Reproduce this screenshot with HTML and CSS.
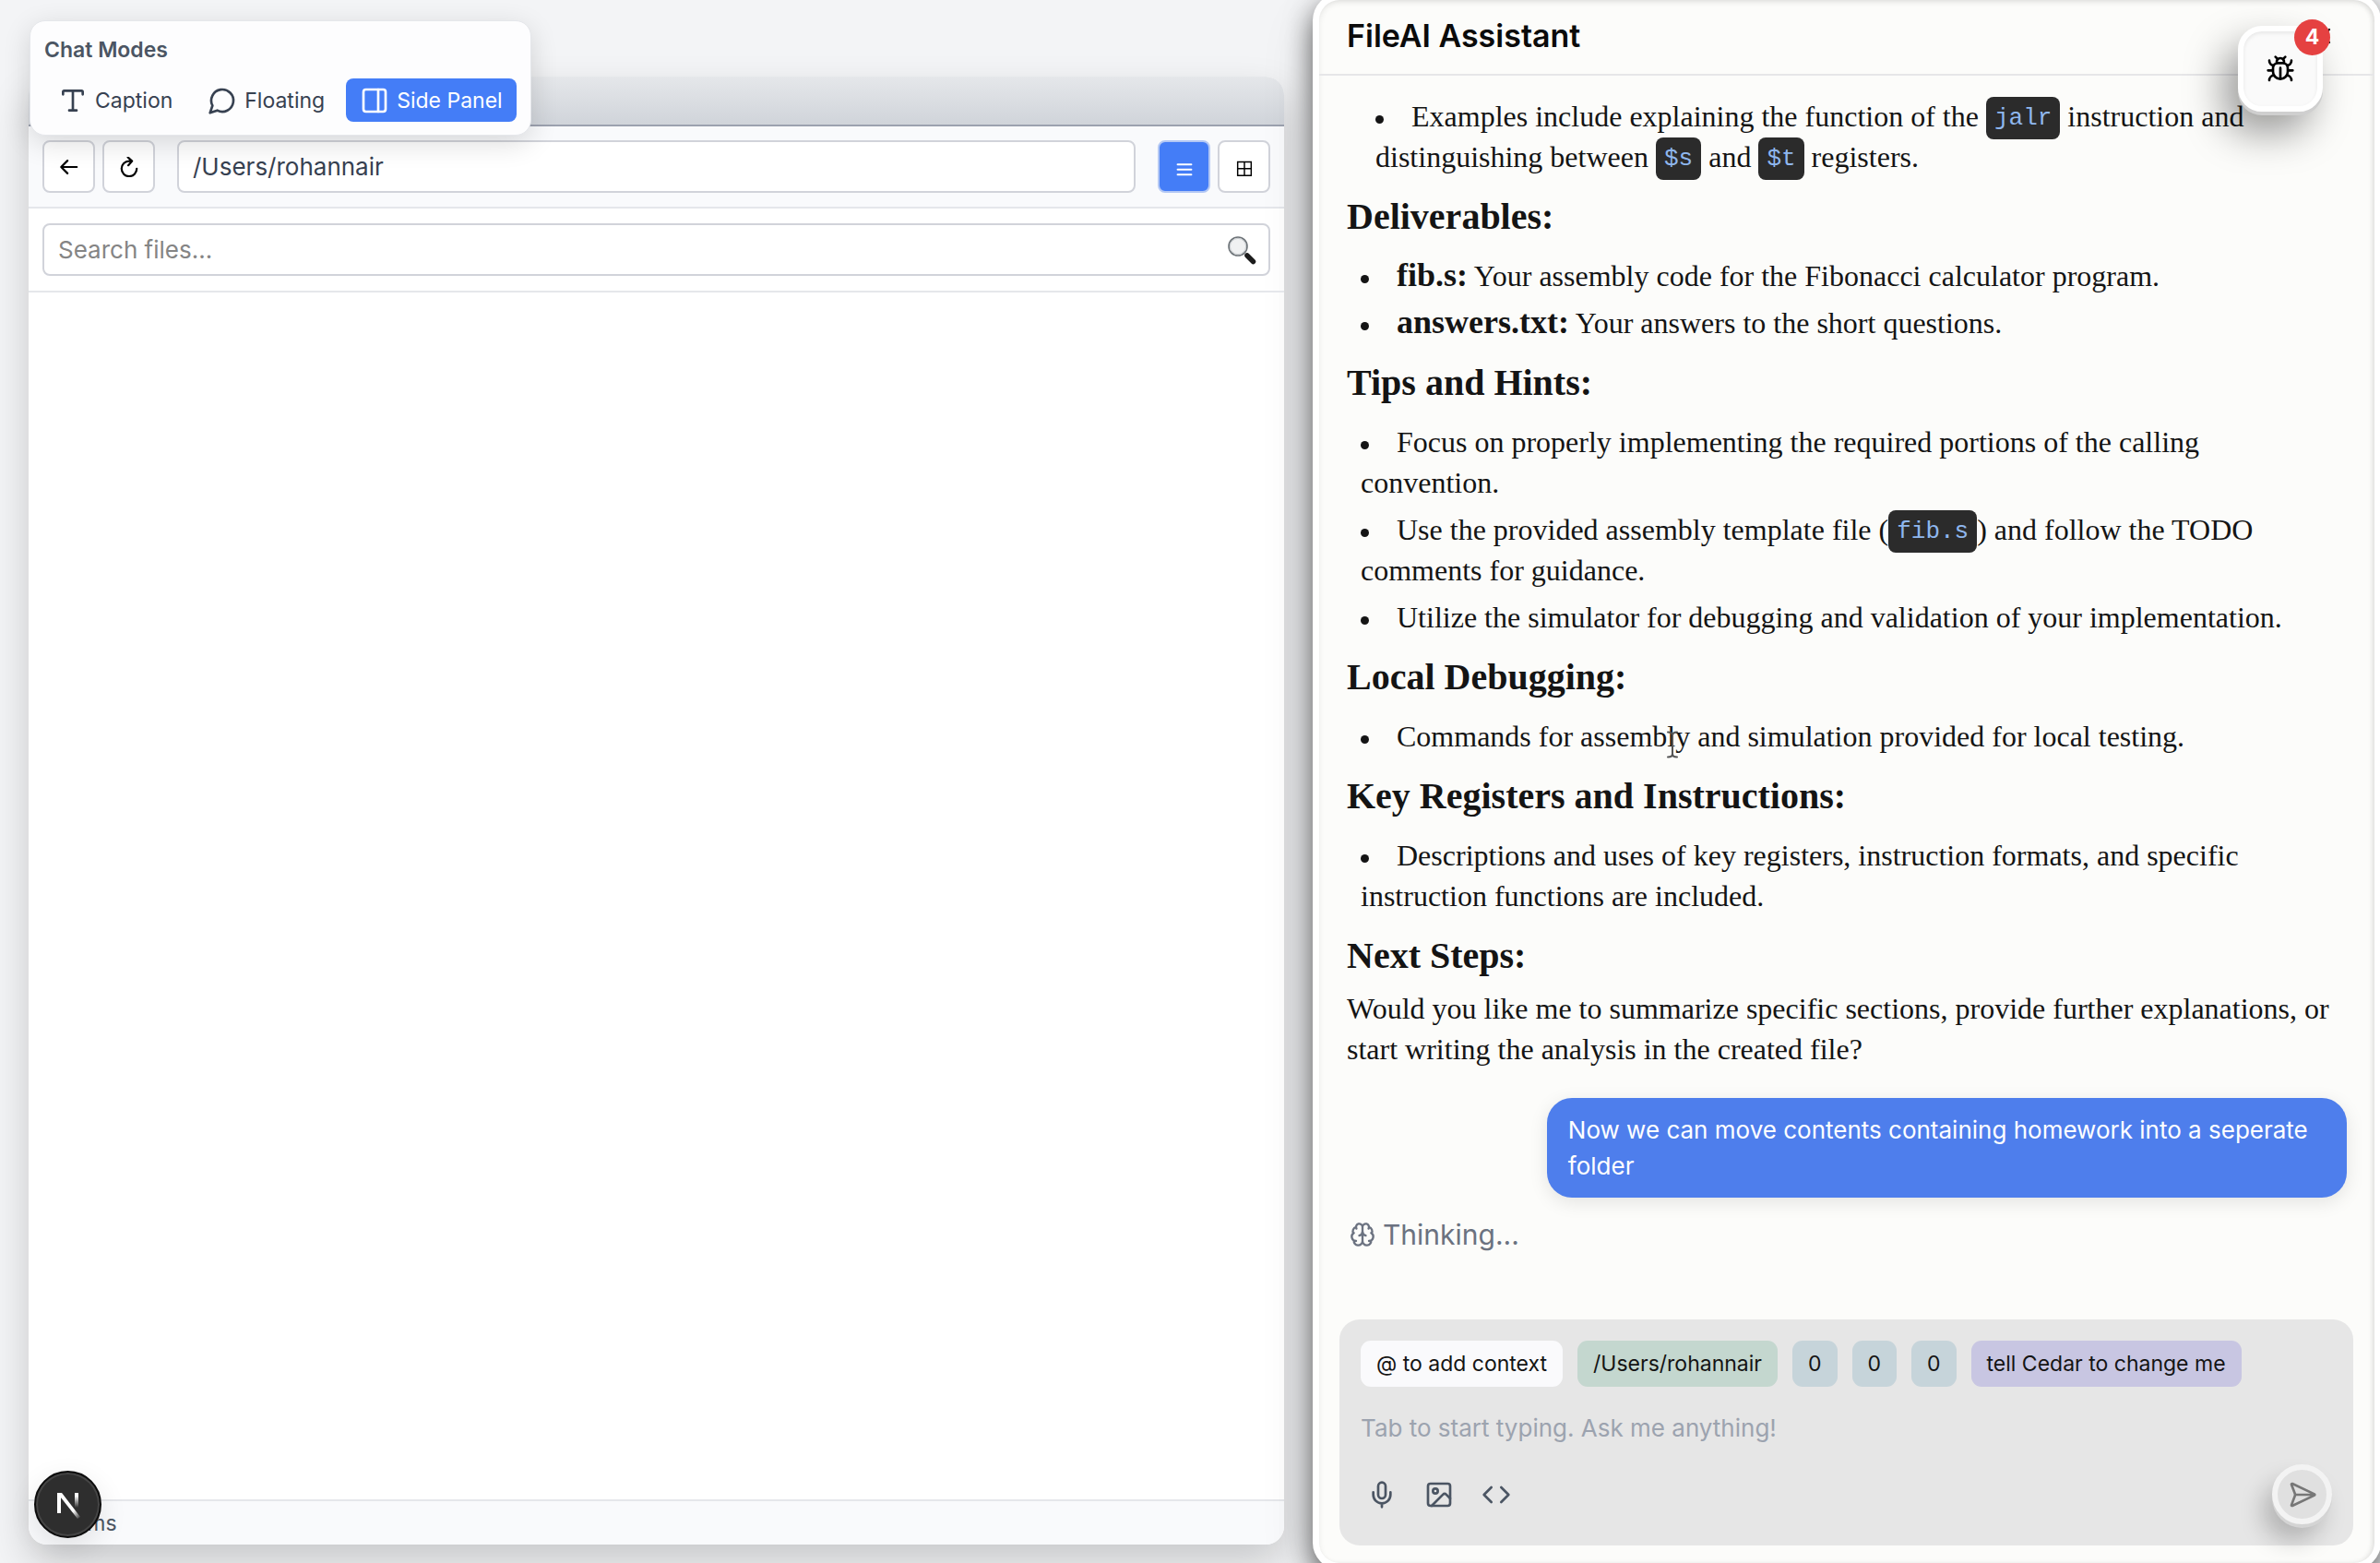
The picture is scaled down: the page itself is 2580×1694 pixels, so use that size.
FILE: index.html
```html
<!DOCTYPE html>
<html lang="en">
<head>
<meta charset="utf-8">
<title>FileAI</title>
<meta name="viewport" content="width=device-width, initial-scale=1">
<link rel="stylesheet" href="styles.css">
</head>
<body>
<div class="app">
  <main class="workspace">
    <section class="window" aria-label="File browser">
      <div class="titlebar"></div>
      <div class="toolbar">
        <div class="nav">
          <button class="tool" type="button" aria-label="Back"><svg class="glyph" viewBox="0 0 24 24"><path d="M21 12H3M10 4.500L2.500 12l7.500 7.500"/></svg></button>
          <button class="tool" type="button" aria-label="Reload"><svg class="glyph" viewBox="0 0 24 24"><path d="M15 5h-3a9 9 0 1 0 9 9M10.500 0.500L15.500 5l-4.500 5"/></svg></button>
        </div>
        <input class="field path" type="text" value="/Users/rohannair" aria-label="Path">
        <div class="views">
          <button class="tool tool-active" type="button" aria-label="List view"><svg class="glyph" viewBox="0 0 24 24"><path d="M4 9h16M4 15h16M4 21h16"/></svg></button>
          <button class="tool" type="button" aria-label="Grid view"><svg class="glyph glyph-grid" viewBox="0 0 24 24"><path d="M4 6h16v16H4zM12 6v16M4 14h16"/></svg></button>
        </div>
      </div>
      <div class="search">
        <input class="field search-field" type="text" placeholder="Search files..." aria-label="Search files">
        <svg class="search-icon" viewBox="0 0 32 32" aria-hidden="true"><path d="M20 20l3 3" stroke="#777" stroke-width="3"/><path d="M22 22l6.500 6.500" stroke="#1c1c1c" stroke-width="5.500" stroke-linecap="round"/><circle cx="12" cy="12" r="10" fill="#f0f1f2" stroke="#6d7378" stroke-width="1.600"/><circle cx="12" cy="12" r="8.600" fill="none" stroke="#c9cdd0" stroke-width="1"/></svg>
      </div>
      <div class="files"></div>
      <footer class="statusbar">0 items</footer>
    </section>
  </main>

  <aside class="panel" aria-label="FileAI Assistant">
    <header class="panel-head">
      <h1 class="panel-title">FileAI Assistant</h1>
      <button class="close" type="button" aria-label="Close"><svg class="icon-sm" viewBox="0 0 24 24"><path d="M18 6L6 18M6 6l12 12"/></svg></button>
    </header>

    <div class="chat">
      <article class="prose">
        <ul class="list list-nested">
          <li>Examples include explaining the function of the <code>jalr</code> instruction and distinguishing between <code>$s</code> and <code>$t</code> registers.</li>
        </ul>
        <h3>Deliverables:</h3>
        <ul class="list">
          <li><strong>fib.s:</strong> Your assembly code for the Fibonacci calculator program.</li>
          <li><strong>answers.txt:</strong> Your answers to the short questions.</li>
        </ul>
        <h3>Tips and Hints:</h3>
        <ul class="list">
          <li>Focus on properly implementing the required portions of the calling convention.</li>
          <li>Use the provided assembly template file (<code>fib.s</code>) and follow the TODO comments for guidance.</li>
          <li>Utilize the simulator for debugging and validation of your implementation.</li>
        </ul>
        <h3>Local Debugging:</h3>
        <ul class="list">
          <li>Commands for assemb<span class="caret-anchor"><svg class="ibeam" viewBox="0 0 12 30" aria-hidden="true"><path d="M1 1.500c3 0 5 1 5 3.500v20c0 2.500-2 3.500-5 3.500M11 1.500c-3 0-5 1-5 3.500v20c0 2.500 2 3.500 5 3.500"/></svg></span>ly and simulation provided for local testing.</li>
        </ul>
        <h3>Key Registers and Instructions:</h3>
        <ul class="list">
          <li>Descriptions and uses of key registers, instruction formats, and specific instruction functions are included.</li>
        </ul>
        <h3>Next Steps:</h3>
        <p>Would you like me to summarize specific sections, provide further explanations, or start writing the analysis in the created file?</p>
      </article>
      <p class="bubble">Now we can move contents containing homework into a seperate folder</p>
      <div class="thinking"><svg class="icon-sm" viewBox="0 0 24 24" aria-hidden="true"><path d="M12 18V5M15 13a4.170 4.170 0 0 1-3-4 4.170 4.170 0 0 1-3 4M17.598 6.500A3 3 0 1 0 12 5a3 3 0 1 0-5.598 1.500M17.997 5.125a4 4 0 0 1 2.526 5.770M18 18a4 4 0 0 0 2-7.464M19.967 17.483A4 4 0 1 1 12 18a4 4 0 1 1-7.967-.517M6 18a4 4 0 0 1-2-7.464M6.003 5.125a4 4 0 0 0-2.526 5.770"/></svg><span>Thinking...</span></div>
    </div>

    <form class="composer">
      <div class="chips">
        <button class="chip" type="button">@ to add context</button>
        <button class="chip chip-green" type="button">/Users/rohannair</button>
        <button class="chip chip-blue" type="button">0</button>
        <button class="chip chip-blue" type="button">0</button>
        <button class="chip chip-blue" type="button">0</button>
        <button class="chip chip-violet" type="button">tell Cedar to change me</button>
      </div>
      <input class="prompt" type="text" placeholder="Tab to start typing. Ask me anything!" aria-label="Message">
      <div class="actions">
        <div class="attach">
          <button class="bare" type="button" aria-label="Record"><svg class="icon" viewBox="0 0 24 24"><path d="M12 19v3M19 10v2a7 7 0 0 1-14 0v-2"/><rect x="9" y="2" width="6" height="13" rx="3"/></svg></button>
          <button class="bare" type="button" aria-label="Add image"><svg class="icon" viewBox="0 0 24 24"><rect x="3" y="3" width="18" height="18" rx="2"/><circle cx="9" cy="9" r="2"/><path d="M21 15l-3.086-3.086a2 2 0 0 0-2.828 0L6 21"/></svg></button>
          <button class="bare" type="button" aria-label="Add code"><svg class="icon" viewBox="0 0 24 24"><path d="M16 18l6-6-6-6M8 6l-6 6 6 6"/></svg></button>
        </div>
        <button class="send" type="submit" aria-label="Send"><svg class="icon" viewBox="0 0 24 24"><path d="M3.714 3.048a.498.498 0 0 0-.683.627l2.843 7.627a2 2 0 0 1 0 1.396l-2.842 7.627a.498.498 0 0 0 .682.627l18-8.500a.5.5 0 0 0 0-.904zM6 12h16"/></svg></button>
      </div>
    </form>
  </aside>
</div>

<section class="modes" aria-labelledby="modes-title">
  <h2 class="modes-title" id="modes-title">Chat Modes</h2>
  <div class="modes-row">
    <button class="mode" type="button"><svg class="icon" viewBox="0 0 24 24"><path d="M12 4v16M4 7V5a1 1 0 0 1 1-1h14a1 1 0 0 1 1 1v2M9 20h6"/></svg>Caption</button>
    <button class="mode" type="button"><svg class="icon" viewBox="0 0 24 24"><path d="M7.900 20A9 9 0 1 0 4 16.100L2 22Z"/></svg>Floating</button>
    <button class="mode mode-active" type="button"><svg class="icon" viewBox="0 0 24 24"><rect x="3" y="3" width="18" height="18" rx="2"/><path d="M15 3v18"/></svg>Side Panel</button>
  </div>
</section>

<button class="debug" type="button" aria-label="Debugger, 4 entries">
  <svg class="icon" viewBox="0 0 24 24"><path d="M8 2l1.880 1.880M14.120 3.880L16 2M9 7.130v-1a3.003 3.003 0 1 1 6 0v1M12 20c-3.300 0-6-2.700-6-6v-3a4 4 0 0 1 4-4h4a4 4 0 0 1 4 4v3c0 3.300-2.700 6-6 6M12 20v-9M6.530 9C4.600 8.800 3 7.100 3 5M6 13H2M3 21c0-2.100 1.700-3.900 3.800-4M20.970 5c0 2.100-1.600 3.800-3.500 4M22 13h-4M17.200 17c2.100.1 3.800 1.900 3.800 4"/></svg>
  <span class="badge">4</span>
</button>

<button class="next" type="button" aria-label="Next.js tools">
  <svg class="next-mark" viewBox="0 0 28 30"><defs><linearGradient id="fade" x1="0" y1="0" x2="0" y2="1"><stop offset=".2" stop-color="#fff"/><stop offset="1" stop-color="#fff" stop-opacity="0"/></linearGradient><linearGradient id="fade2" x1="0" y1="0" x2="1" y2="1"><stop offset=".7" stop-color="#fff"/><stop offset="1" stop-color="#fff" stop-opacity="0"/></linearGradient></defs><path d="M2 2h4v22H2z" fill="#fff"/><path d="M2 2h5l20 26-3 2z" fill="url(#fade2)"/><path d="M21 2h4v16h-4z" fill="url(#fade)"/></svg>
</button>
</body>
</html>
```
FILE: styles.css
```css
*, *::before, *::after { box-sizing: border-box; }

body {
  margin: 0;
  background: #f3f4f6;
  color: #141414;
  font-family: Inter, "Liberation Sans", sans-serif;
  font-size: 26px;
}

button, input { font: inherit; color: inherit; }
button { padding: 0; border: 0; background: none; }
h1, h2, h3, p, ul { margin: 0; padding: 0; }
ul { list-style: none; }

svg { display: block; flex: none; }
.icon, .icon-sm, .glyph, .ibeam {
  fill: none;
  stroke: currentColor;
  stroke-width: 2;
  stroke-linecap: round;
  stroke-linejoin: round;
}
.icon { width: 32px; height: 32px; }
.icon-sm { width: 28px; height: 28px; }
.glyph { width: 22px; height: 22px; stroke-width: 2.4; }
.glyph-grid { stroke-width: 1.6; stroke-linecap: butt; stroke-linejoin: miter; }

.app {
  display: grid;
  grid-template-columns: minmax(0, 1423fr) minmax(0, 1157fr);
  height: 100vh;
  overflow: hidden;
}

/* File browser */
.workspace { display: flex; padding: 83px 31px 20px; }
.window {
  flex: 1;
  min-width: 0;
  display: flex;
  flex-direction: column;
  border-radius: 20px;
  background: #fff;
  overflow: hidden;
  box-shadow: 0 20px 44px rgba(0, 0, 0, .18);
}
.titlebar {
  height: 54px;
  border-bottom: 2px solid #9ca1af;
  background: linear-gradient(#e5e7ea, #d0d4da);
}
.toolbar {
  display: flex;
  gap: 24px;
  padding: 15px;
  border-bottom: 2px solid #e5e7eb;
  background: #f9fafc;
}
.nav, .views { display: flex; gap: 8px; }
.tool {
  display: grid;
  place-items: center;
  width: 57px;
  height: 57px;
  border: 2px solid #d1d3da;
  border-radius: 8px;
  background: #fff;
  color: #000;
}
.tool-active { background: #447df7; border-color: #b4c8f4; color: #fff; }
.field {
  min-width: 0;
  height: 57px;
  padding: 0 15px;
  border: 2px solid #d1d3da;
  border-radius: 8px;
  background: #fff;
  outline: 0;
}
.path { flex: 1; color: #374151; }
.search {
  display: flex;
  align-items: center;
  padding: 16px 15px;
  border-bottom: 2px solid #e5e7eb;
  position: relative;
}
.search-field { flex: 1; padding-right: 56px; }
.search-field::placeholder { color: #858585; opacity: 1; }
.search-icon { position: absolute; right: 30px; width: 32px; height: 32px; }
.files { flex: 1; }
.statusbar {
  height: 49px;
  padding: 0 16px;
  border-top: 2px solid #e5e7eb;
  background: #f9fafc;
  color: #4b5563;
  font-size: 23px;
  line-height: 48px;
}

/* Assistant panel */
.panel {
  min-width: 0;
  display: flex;
  flex-direction: column;
  margin: 0 6px 0 7px;
  border-radius: 22px;
  background: #fcfcfa;
  box-shadow: inset 0 3px 6px rgba(0, 0, 0, .08), inset -3px 0 5px rgba(0, 0, 0, .07), 0 0 0 7px #fff, 0 12px 30px 7px rgba(0, 0, 0, .62), -6px 20px 60px rgba(0, 0, 0, .12);
}
.panel-head {
  display: flex;
  align-items: center;
  justify-content: space-between;
  height: 82px;
  padding: 0 42px 2px 30px;
  border-bottom: 2px solid #e6e6e8;
}
.panel-title { font-size: 34px; line-height: 40px; font-weight: 600; color: #0b0b0b; }
.close { color: #111; }

.chat {
  flex: 1;
  min-height: 0;
  display: flex;
  flex-direction: column;
  padding: 22px 30px 0;
  overflow: hidden;
}
.prose {
  margin-bottom: 31px;
  font-family: "Liberation Serif", serif;
  font-size: 32px;
  line-height: 44px;
}
.prose h3 { margin: 14px 0; font-size: 40px; line-height: 43px; font-weight: 700; }
.prose strong { font-size: 36px; line-height: 40px; }
.list { display: grid; gap: 7px; padding: 7px 8px 7px 15px; }
.list-nested { padding: 0 8px 7px 31px; }
.list li::before {
  content: "";
  display: inline-block;
  width: 9px;
  height: 9px;
  margin-right: 30px;
  border-radius: 50%;
  background: #141414;
  vertical-align: middle;
}
.prose code {
  padding: 8px 9px;
  border-radius: 8px;
  background: #2b2b2b;
  color: #8fb7ee;
  font-family: "Liberation Mono", monospace;
  font-size: 26px;
  line-height: 30px;
  vertical-align: 2px;
}
.caret-anchor { position: relative; }
.ibeam {
  position: absolute;
  left: 0;
  top: 12px;
  width: 12px;
  height: 30px;
  color: #555;
}
.bubble {
  align-self: flex-end;
  max-width: 80%;
  padding: 15px 23px;
  border-radius: 27px;
  background: #4e7eec;
  color: #fff;
  line-height: 39px;
  box-shadow: 0 5px 20px rgba(0, 0, 0, .1);
}
.thinking {
  display: flex;
  align-items: center;
  gap: 8px;
  margin: 20px 0 0 3px;
  color: #6b7280;
  font-size: 30px;
  line-height: 40px;
}

.composer {
  display: flex;
  flex-direction: column;
  margin: 0 23px 19px 22px;
  padding: 23px;
  border-radius: 22px;
  background: #e6e6e6;
}
.chips { display: flex; flex-wrap: wrap; gap: 16px; }
.chip {
  height: 50px;
  padding: 0 17px;
  border-radius: 11px;
  background: #fafafc;
  font-size: 23px;
}
.chip-green { background: #c4d7cf; }
.chip-blue { background: #c6d4da; }
.chip-violet { background: #c8c6e2; }
.prompt {
  height: 40px;
  margin-top: 24px;
  padding: 0;
  border: 0;
  background: none;
  outline: 0;
}
.prompt::placeholder { color: #9ca3af; opacity: 1; }
.actions { display: flex; align-items: center; justify-content: space-between; margin-top: 20px; }
.attach { display: flex; gap: 30px; padding-left: 7px; color: #4b5563; }
.send {
  display: grid;
  place-items: center;
  width: 65px;
  height: 65px;
  border: 6px solid #f3f3f3;
  border-radius: 50%;
  background: #e0e0e0;
  color: #777;
  box-shadow: 0 4px 0 #d4d4d4, -10px 18px 26px rgba(0, 0, 0, .22);
}

/* Floating controls */
.modes {
  position: absolute;
  left: 32px;
  top: 22px;
  padding: 14px 15px;
  border: 1px solid #e5e7eb;
  border-radius: 17px;
  background: #fdfdfe;
  box-shadow: 0 8px 30px rgba(0, 0, 0, .14);
}
.modes-title { font-size: 23px; line-height: 34px; font-weight: 600; color: #4b5563; }
.modes-row { display: flex; gap: 8px; margin-top: 14px; }
.mode {
  display: flex;
  align-items: center;
  gap: 8px;
  height: 47px;
  padding: 0 15px;
  border-radius: 8px;
  color: #374151;
  font-size: 23px;
}
.mode-active { background: #447df7; color: #fff; }

.debug {
  position: absolute;
  right: 62px;
  top: 28px;
  display: grid;
  place-items: center;
  width: 92px;
  height: 93px;
  border: 6px solid #fff;
  border-radius: 26px;
  background: #fafafa;
  color: #000;
  box-shadow: 0 4px 0 #cfcfcf, -14px 22px 44px rgba(0, 0, 0, .4), inset 0 2px 4px rgba(0, 0, 0, .08);
}
.badge {
  position: absolute;
  right: -14px;
  top: -13px;
  width: 39px;
  height: 39px;
  border-radius: 50%;
  background: #e54141;
  color: #fff;
  font-size: 23px;
  line-height: 39px;
  font-weight: 700;
}
.next {
  position: absolute;
  left: 37px;
  bottom: 27px;
  display: grid;
  place-items: center;
  width: 73px;
  height: 73px;
  border: 2px solid #0c0c0c;
  border-radius: 50%;
  background: #2e2e2e;
  box-shadow: inset 0 0 0 2px #454545, 0 10px 30px rgba(0, 0, 0, .1);
}
.next-mark { width: 28px; height: 30px; }
```
